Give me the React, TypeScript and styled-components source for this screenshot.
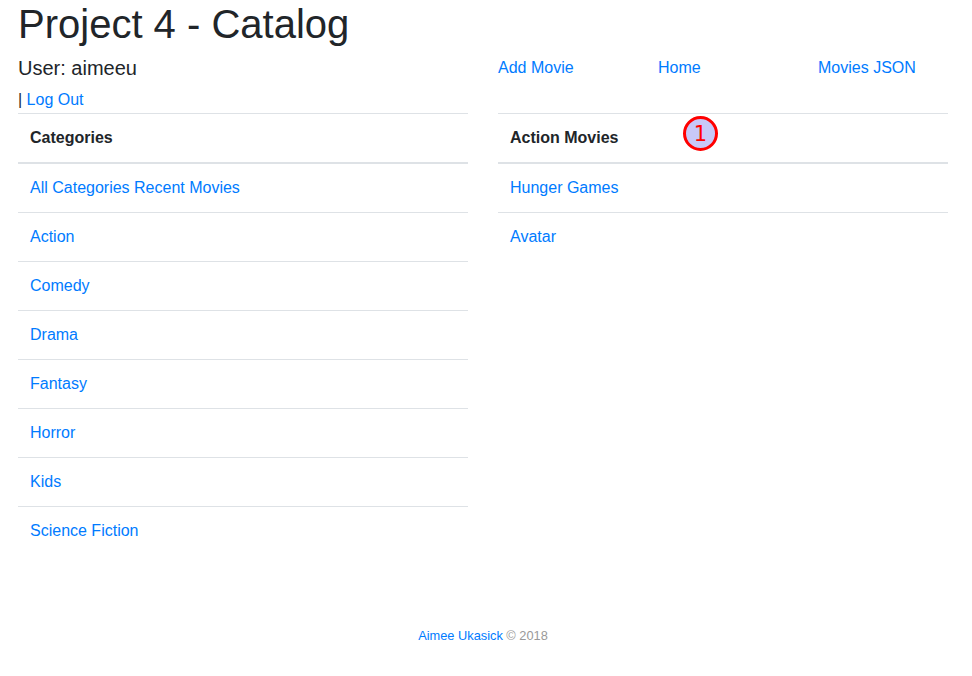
import React from "react";
import styled, { createGlobalStyle } from "styled-components";

const Global = createGlobalStyle`
  html, body { margin: 0; padding: 0; background: #fff; }
  body {
    font-family: "Liberation Sans", Arial, sans-serif;
    font-size: 16px;
    line-height: 1.5;
    color: #212529;
  }
  * { box-sizing: border-box; }
`;

const Page = styled.div`
  padding: 0 3px;
  width: 966px;
  position: relative;
`;

const Row = styled.div`
  display: grid;
  grid-template-columns: 480px 480px;
`;

const Col = styled.div`
  padding: 0 15px;
  min-width: 0;
`;

const Title = styled.h1`
  margin: 0 0 8px;
  padding: 0 15px;
  font-size: 40px;
  font-weight: 500;
  line-height: 1.2;
`;

const UserName = styled.h5`
  margin: 0 0 8px;
  font-size: 20px;
  font-weight: 500;
  line-height: 1.2;
`;

const LogLine = styled.div`
  height: 25px;
`;

const Link = styled.a`
  color: #007bff;
  text-decoration: none;
`;

const Nav = styled.div`
  display: grid;
  grid-template-columns: repeat(3, 160px);
`;

const Table = styled.table`
  width: 100%;
  border-collapse: collapse;
  margin-bottom: 16px;
`;

const Th = styled.th`
  text-align: left;
  padding: 12px;
  font-weight: bold;
  border-top: 1px solid #dee2e6;
  border-bottom: 2px solid #dee2e6;
  line-height: 24px;
`;

const Td = styled.td`
  padding: 12px;
  line-height: 24px;
  border-top: 1px solid #dee2e6;
`;

const Footer = styled.footer`
  text-align: center;
  font-size: 12.8px;
  color: #999;
  margin-top: 55px;
`;

const Badge = styled.div`
  position: absolute;
  left: 683px;
  top: 116px;
  width: 35px;
  height: 35px;
  border-radius: 50%;
  border: 3px solid #ff0000;
  background: #c8c8f8;
  color: #ff0000;
  font-family: "DejaVu Sans", sans-serif;
  font-size: 21px;
  line-height: 30px;
  text-align: center;
`;

const categories = [
  "All Categories Recent Movies",
  "Action",
  "Comedy",
  "Drama",
  "Fantasy",
  "Horror",
  "Kids",
  "Science Fiction",
];

const movies = ["Hunger Games", "Avatar"];

export default function App() {
  return (
    <>
      <Global />
      <Page>
        <Title>Project 4 - Catalog</Title>
        <Row>
          <Col>
            <UserName>User: aimeeu</UserName>
            <LogLine>
              | <Link href="#">Log Out</Link>
            </LogLine>
          </Col>
          <Col>
            <Nav>
              <Link href="#">Add Movie</Link>
              <Link href="#">Home</Link>
              <Link href="#">Movies JSON</Link>
            </Nav>
          </Col>
        </Row>
        <Row>
          <Col>
            <Table>
              <thead>
                <tr>
                  <Th>Categories</Th>
                </tr>
              </thead>
              <tbody>
                {categories.map((c) => (
                  <tr key={c}>
                    <Td>
                      <Link href="#">{c}</Link>
                    </Td>
                  </tr>
                ))}
              </tbody>
            </Table>
          </Col>
          <Col>
            <Table>
              <thead>
                <tr>
                  <Th>Action Movies</Th>
                </tr>
              </thead>
              <tbody>
                {movies.map((m) => (
                  <tr key={m}>
                    <Td>
                      <Link href="#">{m}</Link>
                    </Td>
                  </tr>
                ))}
              </tbody>
            </Table>
          </Col>
        </Row>
        <Footer>
          <Link href="#">Aimee Ukasick</Link> © 2018
        </Footer>
        <Badge>1</Badge>
      </Page>
    </>
  );
}
